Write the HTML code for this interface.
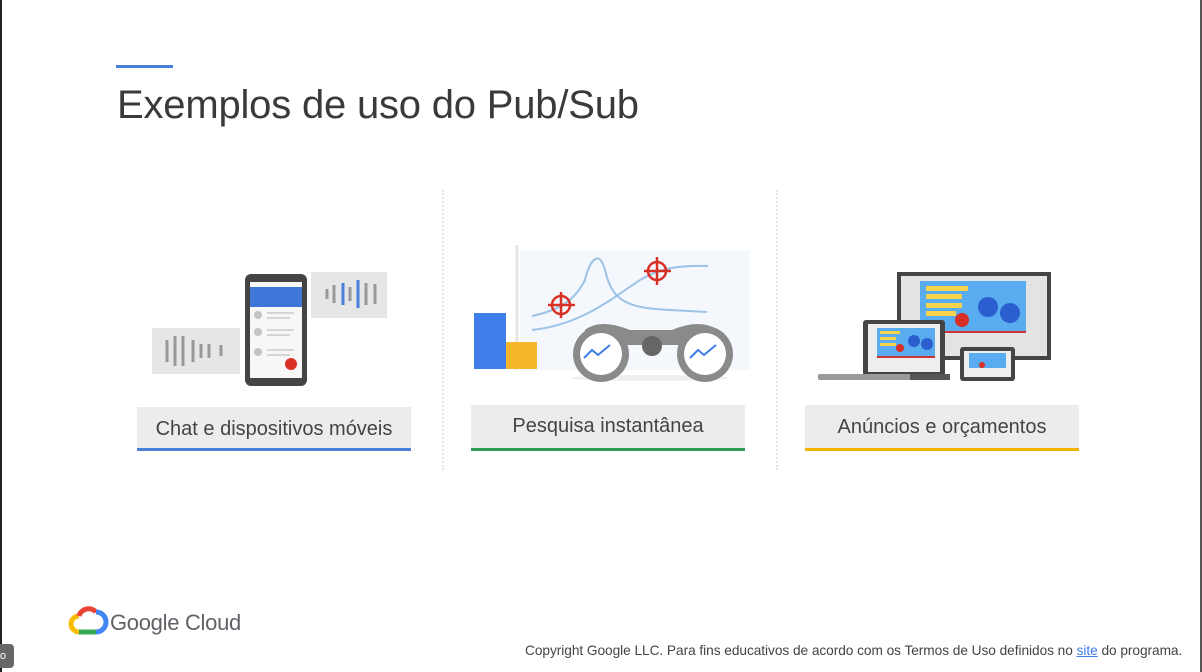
<!DOCTYPE html>
<html><head><meta charset="utf-8"><style>
*{margin:0;padding:0;box-sizing:border-box}
body{width:1202px;height:672px;background:#fff;position:relative;overflow:hidden;font-family:"Liberation Sans",sans-serif;color:#3c3c3c}
.abs{position:absolute}
.lbl{position:absolute;background:#ececec;height:42px;font-size:20px;color:#444;text-align:center;line-height:40px}
.sep{position:absolute;top:190px;height:280px;border-left:2px dotted #e6e6e6}
</style></head><body>
<div class="abs" style="left:0;top:0;width:2px;height:672px;background:#222"></div>
<div class="abs" style="right:0;top:0;width:2px;height:672px;background:#555"></div>
<div class="abs" style="left:116px;top:65px;width:57px;height:3px;background:#4a80d9"></div>
<div class="abs" style="left:117px;top:83px;font-size:40px;color:#3a3a3a;letter-spacing:-0.2px">Exemplos de uso do Pub/Sub</div>
<div class="sep" style="left:442px"></div>
<div class="sep" style="left:776px"></div>

<svg class="abs" style="left:0;top:0" width="1202" height="672">
<rect x="152" y="328" width="88" height="46" fill="#e6e6e6"/>
<g stroke="#999" stroke-width="3"><line x1="167" y1="340" x2="167" y2="362"/><line x1="175" y1="336" x2="175" y2="366"/><line x1="183" y1="336" x2="183" y2="366"/><line x1="193" y1="340" x2="193" y2="362"/><line x1="201" y1="344" x2="201" y2="358"/><line x1="209" y1="344" x2="209" y2="358"/><line x1="221" y1="345" x2="221" y2="356"/></g>
<rect x="311" y="272" width="76" height="46" fill="#e6e6e6"/>
<g stroke="#999" stroke-width="3"><line x1="327" y1="289" x2="327" y2="299"/><line x1="334" y1="285" x2="334" y2="303"/><line x1="343" y1="283" x2="343" y2="305" stroke="#4a80d9"/><line x1="350" y1="287" x2="350" y2="301"/><line x1="358" y1="280" x2="358" y2="308" stroke="#4a80d9"/><line x1="366" y1="283" x2="366" y2="305"/><line x1="375" y1="284" x2="375" y2="304"/></g>
<rect x="245" y="274" width="62" height="112" rx="6" fill="#444"/>
<rect x="250" y="282" width="52" height="96" fill="#f7f7f7"/>
<rect x="250" y="287" width="52" height="20" fill="#3f76d8"/>
<g fill="#c4c4c4"><circle cx="258" cy="315" r="4"/><circle cx="258" cy="332" r="4"/><circle cx="258" cy="352" r="4"/></g>
<g stroke="#ccc" stroke-width="1.5"><line x1="267" y1="313" x2="294" y2="313"/><line x1="267" y1="318" x2="290" y2="318"/><line x1="267" y1="330" x2="294" y2="330"/><line x1="267" y1="335" x2="290" y2="335"/><line x1="267" y1="350" x2="294" y2="350"/><line x1="267" y1="355" x2="290" y2="355"/></g>
<circle cx="291" cy="364" r="6" fill="#d93025"/>
<rect x="520" y="250" width="230" height="120" fill="#f4f8fd"/>
<line x1="517" y1="245" x2="517" y2="370" stroke="#e6e6e6" stroke-width="3"/>
<path d="M532 316 C560 310 575 300 585 280 C590 258 600 250 605 270 C612 300 625 308 670 310 L707 312" fill="none" stroke="#9cc3e6" stroke-width="2"/>
<path d="M532 330 C580 325 610 300 640 280 C660 268 680 265 708 266" fill="none" stroke="#9cc3e6" stroke-width="2"/>
<g stroke="#d93025" stroke-width="2.5" fill="none"><circle cx="561" cy="305" r="9"/><line x1="548" y1="305" x2="575" y2="305"/><line x1="561" y1="292" x2="561" y2="318"/><circle cx="657" cy="271" r="9"/><line x1="644" y1="271" x2="671" y2="271"/><line x1="657" y1="257" x2="657" y2="285"/></g>
<rect x="474" y="313" width="32" height="56" fill="#3f7de8"/>
<rect x="506" y="342" width="31" height="27" fill="#f6b72a"/>
<ellipse cx="650" cy="378" rx="80" ry="3" fill="#eee"/>
<path d="M585 330 Q600 318 630 330 L672 330 Q700 318 718 330 L718 345 L585 345Z" fill="#8a8a8a"/>
<circle cx="652" cy="346" r="10" fill="#666"/>
<circle cx="601" cy="354" r="28" fill="#8a8a8a"/><circle cx="601" cy="354" r="21" fill="#fff"/>
<circle cx="705" cy="354" r="28" fill="#8a8a8a"/><circle cx="705" cy="354" r="21" fill="#fff"/>
<path d="M584 358 L592 350 L598 355 L610 345" stroke="#3f7de8" stroke-width="2" fill="none"/>
<path d="M690 358 L698 350 L704 355 L716 345" stroke="#3f7de8" stroke-width="2" fill="none"/>
<rect x="897" y="272" width="154" height="88" fill="#444"/>
<rect x="901" y="276" width="146" height="80" fill="#e3e3e3"/>
<rect x="920" y="281" width="106" height="52" fill="#5aacf0"/>
<rect x="920" y="331" width="106" height="2" fill="#c33"/>
<g fill="#f6d34a"><rect x="926" y="286" width="42" height="5"/><rect x="926" y="294" width="36" height="5"/><rect x="926" y="303" width="36" height="5"/><rect x="926" y="311" width="30" height="5"/></g>
<circle cx="962" cy="320" r="7" fill="#d93025"/>
<circle cx="988" cy="307" r="10" fill="#2b5fcf"/><circle cx="1010" cy="313" r="10" fill="#2b5fcf"/>
<rect x="863" y="320" width="82" height="56" rx="3" fill="#444"/>
<rect x="868" y="324" width="72" height="48" fill="#eee"/>
<rect x="877" y="328" width="58" height="30" fill="#5aacf0"/>
<rect x="877" y="356" width="58" height="2" fill="#c33"/>
<g fill="#f6d34a"><rect x="880" y="331" width="20" height="3"/><rect x="880" y="337" width="16" height="3"/><rect x="880" y="343" width="16" height="3"/></g>
<circle cx="900" cy="348" r="4" fill="#d93025"/>
<circle cx="914" cy="341" r="6" fill="#2b5fcf"/><circle cx="927" cy="344" r="6" fill="#2b5fcf"/>
<rect x="818" y="374" width="132" height="6" rx="2" fill="#9a9a9a"/>
<rect x="910" y="374" width="40" height="6" fill="#555"/>
<rect x="960" y="347" width="55" height="34" rx="3" fill="#444"/>
<rect x="964" y="351" width="47" height="26" fill="#eee"/>
<rect x="969" y="353" width="37" height="15" fill="#5aacf0"/>
<circle cx="982" cy="365" r="3" fill="#d93025"/>
<path d="M79 632 a8 8 0 0 1 0 -16" stroke="#fbbc04" stroke-width="5" fill="none"/>
<path d="M79 616 a10 10 0 0 1 17 -4" stroke="#ea4335" stroke-width="5" fill="none"/>
<path d="M96 612 a8 8 0 0 1 0 20" stroke="#4285f4" stroke-width="5" fill="none"/>
<path d="M79 632 L96 632" stroke="#34a853" stroke-width="5"/>
</svg>

<div class="lbl" style="left:137px;top:407px;width:274px;border-bottom:3px solid #4a80d9;height:44px;line-height:44px">Chat e dispositivos móveis</div>
<div class="lbl" style="left:471px;top:405px;width:274px;border-bottom:3px solid #2e9a58;height:46px;line-height:42px">Pesquisa instantânea</div>
<div class="lbl" style="left:805px;top:405px;width:274px;border-bottom:3px solid #f0b400;height:46px;line-height:44px">Anúncios e orçamentos</div>

<div class="abs" style="left:110px;top:610px;font-size:22px;color:#5f6368;letter-spacing:-0.3px">Google Cloud</div>
<div class="abs" style="left:525px;top:643px;font-size:13.7px;color:#444;letter-spacing:-0.05px;white-space:nowrap">Copyright Google LLC. Para fins educativos de acordo com os Termos de Uso definidos no <span style="color:#3f7de8;text-decoration:underline">site</span> do programa.</div>
<div class="abs" style="left:0;top:644px;width:14px;height:24px;background:#666;border-radius:0 4px 4px 0;color:#fff;font-size:11px;line-height:24px">o</div>
</body></html>
